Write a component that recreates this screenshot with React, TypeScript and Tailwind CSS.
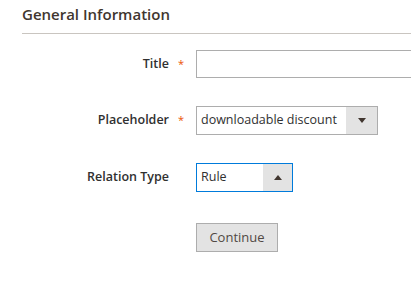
const font = { fontFamily: '"Open Sans", "Liberation Sans", sans-serif' };

function Label({ text, required }: { text: string; required?: boolean }) {
  return (
    <div className="flex w-[196px] shrink-0 items-center">
      <span className="w-[169px] whitespace-nowrap text-right text-[12.5px] font-semibold text-[#303030]">
        {text}
      </span>
      <span className="flex-1 pl-[9px] text-[11px] text-[#eb5202]">
        {required ? "*" : ""}
      </span>
    </div>
  );
}

export default function App() {
  return (
    <div className="h-[287px] w-[411px] overflow-hidden bg-white" style={font}>
      <div className="pl-[22px]">
        <h2 className="border-b border-[#c9c5c0] pt-[4px] pb-[9px] text-[15px] font-semibold leading-[20px] text-[#41362f]">
          General Information
        </h2>
      </div>

      <div className="mt-[16px] flex flex-col gap-[28px]">
        <div className="flex h-[28px] items-center">
          <Label text="Title" required />
          <div className="h-[28px] w-[240px] shrink-0 border border-[#adadad] bg-white" />
        </div>

        <div className="flex h-[29px] items-center">
          <Label text="Placeholder" required />
          <div className="flex h-[29px] w-[182px] items-stretch border border-[#adadad] bg-white">
            <span className="flex flex-1 items-center whitespace-nowrap pl-[4px] text-[12.5px] text-[#303030]">
              downloadable discount
            </span>
            <span className="flex w-[31px] shrink-0 items-center justify-center bg-[#e3e3e3]">
              <svg width="8" height="5" viewBox="0 0 8 5">
                <path d="M0 0h8L4 5z" fill="#41362f" />
              </svg>
            </span>
          </div>
        </div>

        <div className="flex h-[29px] items-center">
          <Label text="Relation Type" />
          <div className="flex h-[29px] w-[97px] items-stretch border border-[#007bdb] bg-white">
            <span className="flex flex-1 items-center pl-[4px] text-[12.5px] text-[#303030]">
              Rule
            </span>
            <span className="flex w-[29px] shrink-0 items-center justify-center bg-[#e3e3e3]">
              <svg width="8" height="5" viewBox="0 0 8 5">
                <path d="M0 5h8L4 0z" fill="#41362f" />
              </svg>
            </span>
          </div>
        </div>

        <div className="mt-[3px] flex h-[29px] items-center">
          <div className="w-[196px] shrink-0" />
          <button className="h-[29px] w-[82px] border border-[#adadad] bg-[#e3e3e3] text-[13px] text-[#514943]">
            Continue
          </button>
        </div>
      </div>
    </div>
  );
}
